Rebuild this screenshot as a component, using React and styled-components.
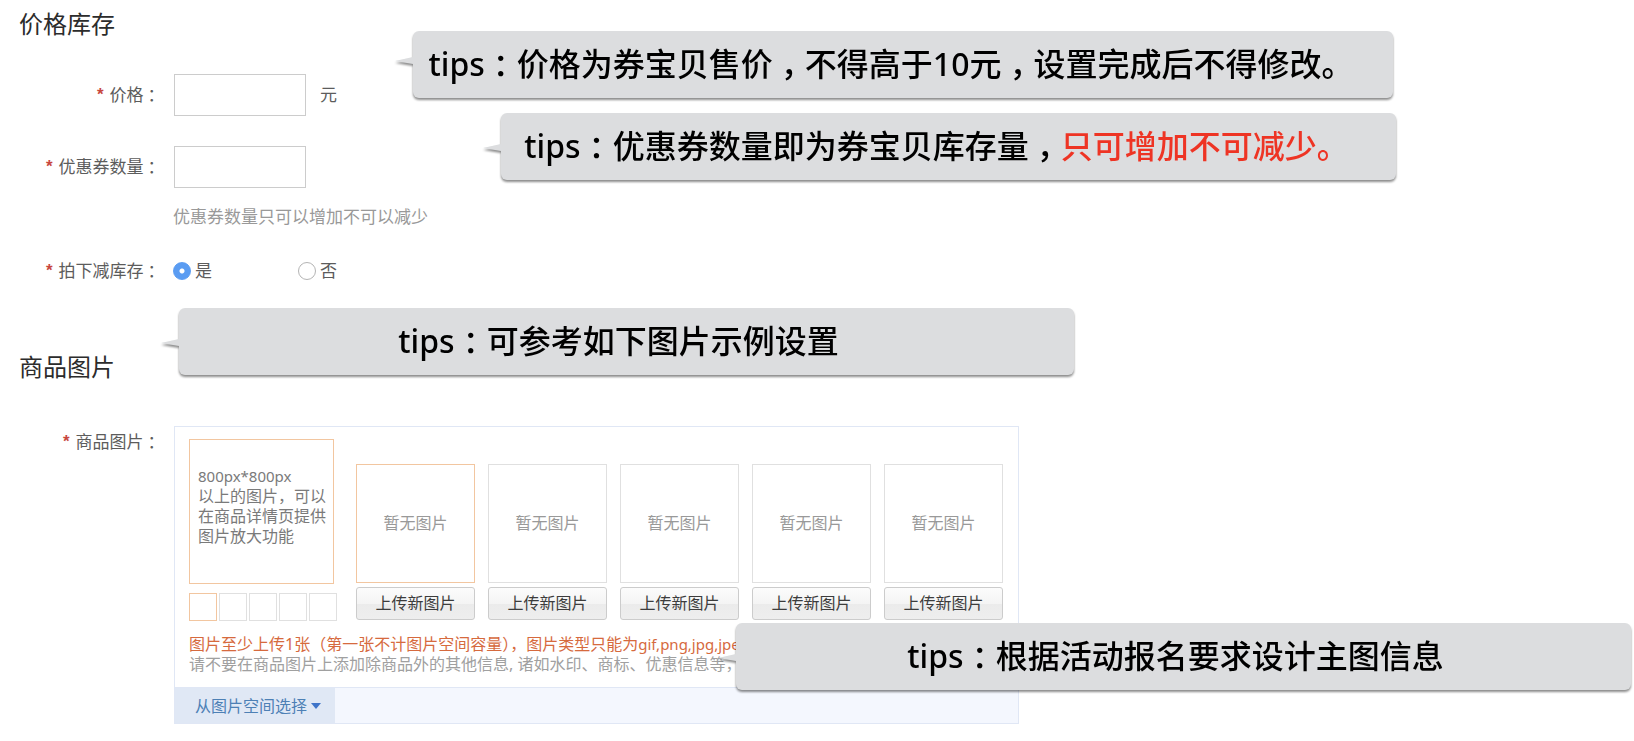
import React, { useState } from "react";
import styled, { createGlobalStyle, css } from "styled-components";

const GlobalStyle = createGlobalStyle`
  *, *::before, *::after { box-sizing: border-box; }
  body {
    margin: 0;
    background: #fff;
    color: #5c5c5c;
    font-family: "Noto Sans", "Noto Sans CJK SC", sans-serif;
    font-size: 17px;
    line-height: 20px;
  }
  button, input { font: inherit; color: inherit; margin: 0; }
`;

const Page = styled.main`
  position: relative;
  padding: 12px 20px 17px 19px;
`;

const SectionTitle = styled.h2`
  margin: 0;
  font-size: 24px;
  font-weight: 400;
  line-height: 24px;
  color: #2c2c2c;
`;

const Fields = styled.div`
  display: flex;
  flex-direction: column;
  padding: 38px 0 74px;
`;

const Row = styled.div`
  position: relative;
  display: flex;
  align-items: ${(p) => (p.$top ? "flex-start" : "center")};
  gap: 14px;
  margin-top: ${(p) => p.$gap || 0}px;
`;

const labelStyle = css`
  flex: 0 0 141px;
  display: flex;
  justify-content: flex-end;
  white-space: nowrap;
  padding-top: ${(p) => p.$offset || 0}px;
`;

const FieldLabel = styled.label`
  ${labelStyle}
`;

const GroupLabel = styled.span`
  ${labelStyle}
`;

const Star = styled.span`
  margin-right: 6px;
  color: #c8473f;
  font-family: "Liberation Sans", sans-serif;
  font-weight: 700;
`;

/* Full-width colons and commas are centred in their cell. */
const Punct = styled.span`
  font-feature-settings: "halt";
  padding: 0 ${(p) => (p.$large ? 8 : 4)}px;
`;

const TextInput = styled.input`
  width: 132px;
  height: 42px;
  padding: 0 8px;
  border: 1px solid #ccc;
  border-radius: 0;
  background: #fff;
  outline: none;
`;

const Hint = styled.p`
  margin: 19px 0 0 154px;
  color: #999;
`;

const Radios = styled.div`
  display: flex;
  gap: 86px;
  margin-left: -1px;
`;

const RadioLabel = styled.label`
  display: flex;
  align-items: center;
  gap: 4px;
`;

const Radio = styled.input`
  appearance: none;
  width: 18px;
  height: 18px;
  border: 1px solid #b4b4b4;
  border-radius: 50%;
  background: #fff;
  &:checked {
    border-color: #5a9cf2;
    background: radial-gradient(circle, #fff 0 2px, #5a9cf2 3px);
  }
`;

const Panel = styled.div`
  flex: 0 1 845px;
  min-width: 0;
  border: 1px solid #e0e7f5;
`;

const PanelBody = styled.div`
  padding: 12px 14px;
  font-size: 16px;
`;

const Gallery = styled.div`
  display: flex;
  gap: 19px;
`;

const Preview = styled.div`
  flex: 0 0 148px;
`;

const PreviewBox = styled.div`
  width: 145px;
  height: 145px;
  padding: 26px 0 0 8px;
  border: 1px solid #f2c6a0;
  color: #7a7a7a;
  white-space: nowrap;
`;

const Latin = styled.span`
  font-size: 15px;
`;

const Thumbs = styled.div`
  display: flex;
  gap: 2px;
  margin-top: 9px;
`;

const Thumb = styled.span`
  width: 28px;
  height: 28px;
  border: 1px solid ${(p) => (p.$active ? "#f2c6a0" : "#e0e0e0")};
`;

const Slots = styled.div`
  display: flex;
  gap: 13px;
  padding-top: 25px;
`;

const Slot = styled.div`
  display: flex;
  flex-direction: column;
  gap: 4px;
  width: 119px;
`;

const SlotBox = styled.div`
  display: grid;
  place-items: center;
  height: 119px;
  padding-bottom: 2px;
  border: 1px solid ${(p) => (p.$active ? "#f2c6a0" : "#e0e0e0")};
  color: #999;
`;

const UploadButton = styled.button`
  height: 33px;
  padding: 0 0 2px;
  border: 1px solid #ccc;
  border-radius: 3px;
  background: linear-gradient(#fcfcfc, #f4f4f4 50%, #ebebeb 51%, #eee);
  color: #3c3c3c;
  line-height: 20px;
`;

const Notes = styled.div`
  padding: 13px 0 1px;
  white-space: nowrap;
`;

const Note = styled.p`
  margin: 0;
  color: ${(p) => (p.$warn ? "#d66a3e" : "#a0a0a0")};
`;

const PanelFooter = styled.div`
  display: flex;
  height: 36px;
  border-top: 1px solid #e0e7f5;
  background: #f4f7fe;
`;

const PickerButton = styled.button`
  display: flex;
  align-items: center;
  gap: 4px;
  width: 160px;
  padding: 0 0 0 20px;
  border: 0;
  background: #e0e8f5;
  color: #4d80b5;
  font-size: 16px;
`;

const TipBox = styled.aside`
  position: absolute;
  z-index: 1;
  left: ${(p) => p.$left}px;
  top: ${(p) => p.$top}px;
  width: ${(p) => p.$width}px;
  padding: 13px ${(p) => p.$trail}px 14px 0;
  border-radius: 6px;
  background: #dcdddf;
  color: #000;
  font-size: 32px;
  font-weight: 500;
  line-height: 40px;
  text-align: center;
  white-space: nowrap;
  filter: drop-shadow(0 2px 1px rgba(0, 0, 0, 0.45));
`;

const Pointer = styled.svg`
  position: absolute;
  right: 100%;
  top: ${(p) => p.$y}px;
`;

const Emphasis = styled.strong`
  font-weight: 500;
  color: #ee3424;
`;

function Tip({ left, top, width, trail = 16, pointerY = 31, children }) {
  return (
    <TipBox $left={left} $top={top} $width={width} $trail={trail}>
      <Pointer $y={pointerY} width="18" height="8" viewBox="0 0 18 8" aria-hidden="true">
        <path d="M0 4 L18 0 V7 Z" fill="#dcdddf" />
      </Pointer>
      tips<Punct $large>：</Punct>
      {children}
    </TipBox>
  );
}

function LabelText({ children }) {
  return (
    <>
      <Star>*</Star>
      <span>
        {children}
        <Punct>：</Punct>
      </span>
    </>
  );
}

export default function App() {
  const [deduct, setDeduct] = useState("yes");
  return (
    <Page lang="zh-CN">
      <GlobalStyle />
      <SectionTitle>价格库存</SectionTitle>
      <Fields>
        <Row>
          <FieldLabel htmlFor="price">
            <LabelText>价格</LabelText>
          </FieldLabel>
          <TextInput id="price" type="text" />
          <span>元</span>
          <Tip left={394} top={-43} width={980} trail={24} pointerY={26}>
            价格为券宝贝售价<Punct $large>，</Punct>不得高于10元<Punct $large>，</Punct>设置完成后不得修改。
          </Tip>
        </Row>
        <Row $gap={30}>
          <FieldLabel htmlFor="quantity">
            <LabelText>优惠券数量</LabelText>
          </FieldLabel>
          <TextInput id="quantity" type="text" />
          <Tip left={482} top={-33} width={895} trail={24}>
            优惠券数量即为券宝贝库存量<Punct $large>，</Punct>
            <Emphasis>只可增加不可减少。</Emphasis>
          </Tip>
        </Row>
        <Hint>优惠券数量只可以增加不可以减少</Hint>
        <Row $gap={34} role="radiogroup" aria-labelledby="deduct-label">
          <GroupLabel id="deduct-label">
            <LabelText>拍下减库存</LabelText>
          </GroupLabel>
          <Radios>
            <RadioLabel>
              <Radio type="radio" name="deduct" checked={deduct === "yes"} onChange={() => setDeduct("yes")} />
              是
            </RadioLabel>
            <RadioLabel>
              <Radio type="radio" name="deduct" checked={deduct === "no"} onChange={() => setDeduct("no")} />
              否
            </RadioLabel>
          </Radios>
          <Tip left={160} top={47} width={895}>
            可参考如下图片示例设置
          </Tip>
        </Row>
      </Fields>

      <SectionTitle>商品图片</SectionTitle>
      <Row $top $gap={47} role="group" aria-labelledby="images-label">
        <GroupLabel id="images-label" $offset={6}>
          <LabelText>商品图片</LabelText>
        </GroupLabel>
        <Panel>
          <PanelBody>
            <Gallery>
              <Preview>
                <PreviewBox>
                  <Latin>800px*800px</Latin>
                  <br />
                  以上的图片，可以
                  <br />
                  在商品详情页提供
                  <br />
                  图片放大功能
                </PreviewBox>
                <Thumbs>
                  {[0, 1, 2, 3, 4].map((i) => (
                    <Thumb key={i} $active={i === 0} />
                  ))}
                </Thumbs>
              </Preview>
              <Slots>
                {[0, 1, 2, 3, 4].map((i) => (
                  <Slot key={i}>
                    <SlotBox $active={i === 0}>暂无图片</SlotBox>
                    <UploadButton type="button">上传新图片</UploadButton>
                  </Slot>
                ))}
              </Slots>
            </Gallery>
            <Notes>
              <Note $warn>
                图片至少上传1张（第一张不计图片空间容量），图片类型只能为<Latin>gif,png,jpg,jpeg</Latin>
              </Note>
              <Note>请不要在商品图片上添加除商品外的其他信息, 诸如水印、商标、优惠信息等，</Note>
            </Notes>
          </PanelBody>
          <PanelFooter>
            <PickerButton type="button">
              从图片空间选择
              <svg width="10" height="6" viewBox="0 0 10 6" aria-hidden="true">
                <path d="M0 0 H10 L5 6 Z" fill="#3f74c9" />
              </svg>
            </PickerButton>
          </PanelFooter>
        </Panel>
        <Tip left={717} top={197} width={895}>
          根据活动报名要求设计主图信息
        </Tip>
      </Row>
    </Page>
  );
}
